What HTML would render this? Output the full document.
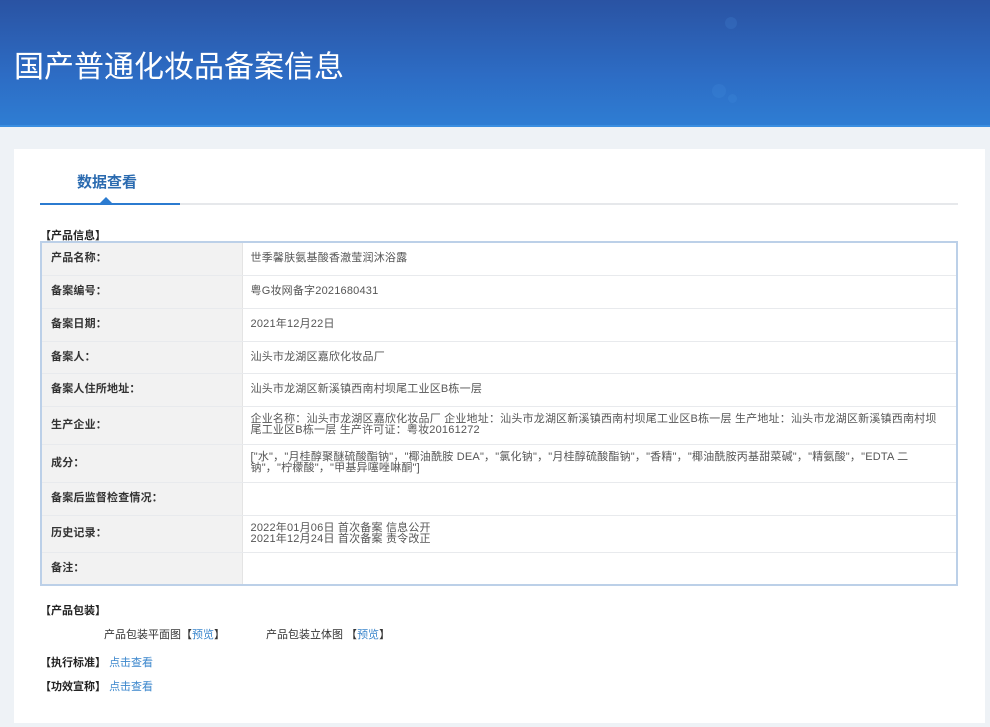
<!DOCTYPE html>
<html><head><meta charset="utf-8"><style>
*{margin:0;padding:0;box-sizing:border-box}
body{width:990px;height:727px;background:#eef2f6;font-family:"Liberation Sans","Noto Sans CJK SC",sans-serif;color:#333;overflow:hidden;position:relative}
.hd{position:absolute;left:0;top:0;width:990px;height:127px;background:linear-gradient(180deg,#2a53a3 0%,#2d6cc4 60%,#2e7dd3 100%);border-bottom:2px solid #3a8ee0}
.hd h1{position:absolute;left:14px;top:48px;font-size:30px;font-weight:normal;color:#fff;line-height:40px}
.dot{position:absolute;border-radius:50%;background:rgba(80,150,230,.18)}
.panel{position:absolute;left:14px;top:149px;width:971px;height:574px;background:#fff}
.tab{position:absolute;left:77px;top:171px;font-size:15px;font-weight:bold;color:#2b6bb0}
.line{position:absolute;left:40px;top:203px;width:918px;height:2px;background:#e6e8eb}
.line2{position:absolute;left:40px;top:203px;width:140px;height:2px;background:#2b7bd0}
.tri{position:absolute;left:100px;top:197px;width:0;height:0;border-left:6px solid transparent;border-right:6px solid transparent;border-bottom:6px solid #2b7bd0}
.sec{position:absolute;left:40px;font-size:11px;font-weight:bold;color:#222}
table{position:absolute;left:40px;top:241px;width:918px;border-collapse:collapse;border:2px solid #bcd0e8;font-size:11px;letter-spacing:0.2px;table-layout:fixed}
td{border-bottom:1px solid #e8eaed;vertical-align:middle;line-height:11px;white-space:nowrap;overflow:hidden}
td.l{width:201px;background:#f2f2f2;font-weight:bold;padding-left:9px;color:#333;border-right:1px solid #e4e4e4}
td.v{padding-left:8px;color:#555}
a{color:#3a86cc;text-decoration:none}
.t{position:absolute;font-size:11px;color:#333}
</style></head><body>
<div class="hd">
<div class="dot" style="left:725px;top:17px;width:12px;height:12px"></div>
<div class="dot" style="left:712px;top:84px;width:14px;height:14px"></div>
<div class="dot" style="left:728px;top:94px;width:9px;height:9px"></div>
<h1>国产普通化妆品备案信息</h1>
</div>
<div class="panel"></div>
<div class="tab">数据查看</div>
<div class="line"></div><div class="line2"></div><div class="tri"></div>
<div class="sec" style="top:227px">【产品信息】</div>
<table>
<tr style="height:33px"><td class="l">产品名称：</td><td class="v">世季馨肤氨基酸香澈莹润沐浴露</td></tr>
<tr style="height:33px"><td class="l">备案编号：</td><td class="v">粤G妆网备字2021680431</td></tr>
<tr style="height:33px"><td class="l">备案日期：</td><td class="v">2021年12月22日</td></tr>
<tr style="height:32px"><td class="l">备案人：</td><td class="v">汕头市龙湖区嘉欣化妆品厂</td></tr>
<tr style="height:33px"><td class="l">备案人住所地址：</td><td class="v">汕头市龙湖区新溪镇西南村坝尾工业区B栋一层</td></tr>
<tr style="height:38px"><td class="l">生产企业：</td><td class="v">企业名称：汕头市龙湖区嘉欣化妆品厂 企业地址：汕头市龙湖区新溪镇西南村坝尾工业区B栋一层 生产地址：汕头市龙湖区新溪镇西南村坝<br>尾工业区B栋一层 生产许可证：粤妆20161272</td></tr>
<tr style="height:38px"><td class="l">成分：</td><td class="v">["水"，"月桂醇聚醚硫酸酯钠"，"椰油酰胺 DEA"，"氯化钠"，"月桂醇硫酸酯钠"，"香精"，"椰油酰胺丙基甜菜碱"，"精氨酸"，"EDTA 二<br>钠"，"柠檬酸"，"甲基异噻唑啉酮"]</td></tr>
<tr style="height:33px"><td class="l">备案后监督检查情况：</td><td class="v"></td></tr>
<tr style="height:37px"><td class="l">历史记录：</td><td class="v">2022年01月06日 首次备案 信息公开<br>2021年12月24日 首次备案 责令改正</td></tr>
<tr style="height:33px"><td class="l">备注：</td><td class="v"></td></tr>
</table>
<div class="sec" style="top:602px">【产品包装】</div>
<div class="t" style="left:104px;top:626px">产品包装平面图【<a>预览</a>】</div>
<div class="t" style="left:266px;top:626px">产品包装立体图 【<a>预览</a>】</div>
<div class="sec" style="top:654px">【执行标准】 <a style="font-weight:normal">点击查看</a></div>
<div class="sec" style="top:678px">【功效宣称】 <a style="font-weight:normal">点击查看</a></div>
</body></html>
